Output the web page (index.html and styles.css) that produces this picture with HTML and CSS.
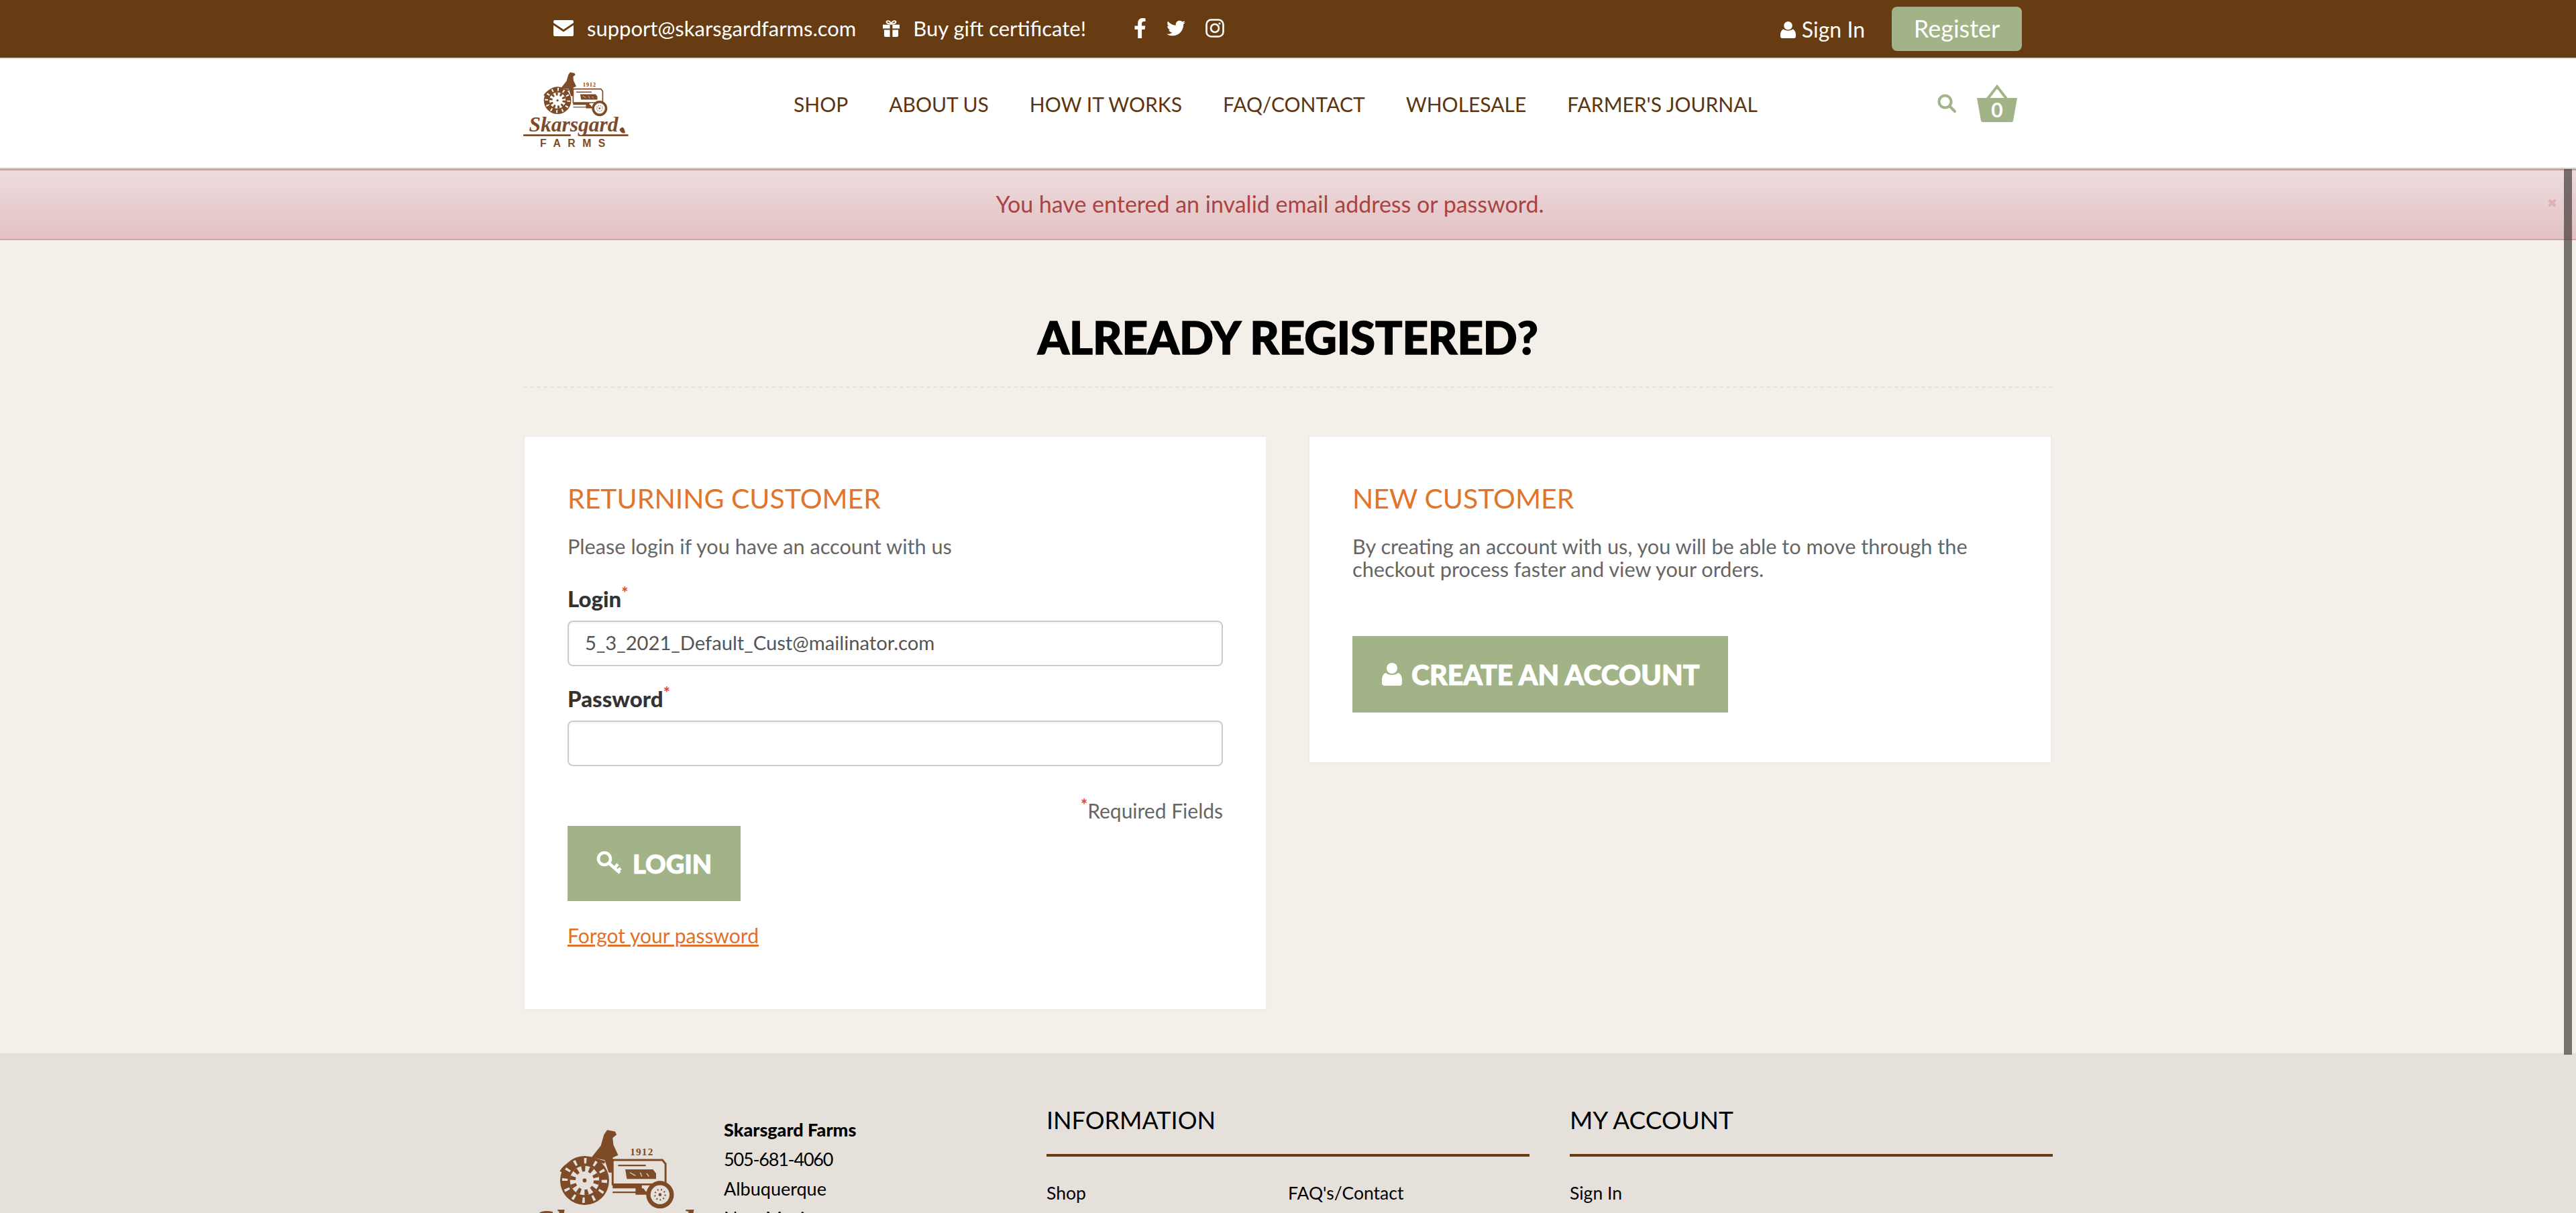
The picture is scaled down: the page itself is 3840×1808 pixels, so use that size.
FILE: index.html
```html
<!DOCTYPE html>
<html lang="en">
<head>
    <meta charset="UTF-8">
    <meta name="viewport" content="width=device-width, initial-scale=1.0">
    <title>Skarsgard Farms - Sign In</title>
    <link rel="stylesheet" href="styles.css">
</head>
<body>
    <div class="scroll-thumb"></div>

    <header>
        <div class="topbar">
            <div class="wrap topbar-row">
                <a class="top-link mail-link" href="#">
                    <svg class="ico-mail" viewBox="0 0 30 24"><path d="M2 0H28A2 2 0 0 1 30 2V4L15 14 0 4V2A2 2 0 0 1 2 0ZM0 7.5 15 17.5 30 7.5V22A2 2 0 0 1 28 24H2A2 2 0 0 1 0 22Z"/></svg>
                    support@skarsgardfarms.com
                </a>
                <a class="top-link gift-link" href="#">
                    <svg class="ico-gift" viewBox="0 0 26 26"><path d="M0 7H11V13H0ZM15 7H26V13H15ZM2 15H11V26H4A2 2 0 0 1 2 24ZM15 15H24V24A2 2 0 0 1 22 26H15Z"/><path class="ico-bow" d="M13 6 C8 6 5 4 6 2 C8 0 12 2 13 6 C14 2 18 0 20 2 C21 4 18 6 13 6Z"/></svg>
                    Buy gift certificate!
                </a>
                <div class="social">
                    <svg class="ico-fb" viewBox="0 0 320 512"><path d="M279.14 288l14.22-92.66h-88.91v-60.13c0-25.35 12.42-50.06 52.24-50.06h40.42V6.26S260.43 0 225.36 0c-73.22 0-121.08 44.38-121.08 124.72v70.62H22.89V288h81.39v224h100.17V288z"/></svg>
                    <svg class="ico-tw" viewBox="0 0 512 512"><path d="M459.37 151.716c.325 4.548.325 9.097.325 13.645 0 138.72-105.583 298.558-298.558 298.558-59.452 0-114.68-17.219-161.137-47.106 8.447.974 16.568 1.299 25.34 1.299 49.055 0 94.213-16.568 130.274-44.832-46.132-.975-84.792-31.188-98.112-72.772 6.498.974 12.995 1.624 19.818 1.624 9.421 0 18.843-1.3 27.614-3.573-48.081-9.747-84.143-51.98-84.143-102.985v-1.299c13.969 7.797 30.214 12.67 47.431 13.319-28.264-18.843-46.781-51.005-46.781-87.391 0-19.492 5.197-37.36 14.294-52.954 51.655 63.675 129.3 105.258 216.365 109.807-1.624-7.797-2.599-15.918-2.599-24.04 0-57.828 46.782-104.934 104.934-104.934 30.213 0 57.502 12.67 76.67 33.137 23.715-4.548 46.456-13.32 66.599-25.34-7.798 24.366-24.366 44.833-46.132 57.827 21.117-2.273 41.584-8.122 60.426-16.243-14.292 20.791-32.161 39.308-52.628 54.253z"/></svg>
                    <svg class="ico-ig" viewBox="0 0 28 28"><rect x="1.5" y="1.5" width="25" height="25" rx="7"/><circle cx="14" cy="14" r="6"/><circle class="ico-dot" cx="21" cy="7" r="1.6"/></svg>
                </div>
                <a class="top-link signin-link" href="#">
                    <svg class="ico-user" viewBox="0 0 24 26"><circle cx="12" cy="6.5" r="6.5"/><path d="M5 12C8 15 16 15 19 12 22 13 24 16 24 21V23A3 3 0 0 1 21 26H3A3 3 0 0 1 0 23V21C0 16 2 13 5 12Z"/></svg>
                    Sign In
                </a>
                <a class="register-btn" href="#">Register</a>
            </div>
        </div>
        <div class="navbar">
            <div class="wrap navbar-row">
                <svg class="logo-head" viewBox="0 0 480 350">
                    <path class="logo-ink" d="M172 72 L196 42 L204 14 L212 2 L232 6 L236 14 L226 22 L228 40 L240 66 L226 72 L232 110 L216 110 L206 78 Z"/>
                    <path class="logo-line" d="M95 108 Q112 78 170 74 L206 84"/>
                    <path class="logo-hood" d="M226 78 H352 L360 88 V140 H226 Z"/>
                    <path class="logo-thin" d="M240 92 H310 M226 160 H322"/>
                    <path class="logo-ink" d="M258 102 H328 L336 112 V126 H262 Z M226 140 H300 V150 H226 Z M284 150 H304 L316 166 H284 Z"/>
                    <path class="logo-gap" d="M270 110 L284 118 M296 110 L300 120 M312 112 L318 120"/>
                    <circle class="logo-ink" cx="155" cy="130" r="62"/>
                    <circle class="logo-tread" cx="155" cy="130" r="50"/>
                    <circle class="logo-gap" cx="155" cy="130" r="36"/>
                    <circle class="logo-ring" cx="155" cy="130" r="30"/>
                    <circle class="logo-ink" cx="155" cy="130" r="5"/>
                    <circle class="logo-ink" cx="346" cy="166" r="35"/>
                    <circle class="logo-gap" cx="346" cy="166" r="23"/>
                    <circle class="logo-ink" cx="346" cy="166" r="4"/>
                    <circle class="logo-spokes" cx="346" cy="166" r="13"/>
                    <text class="logo-year" x="300" y="66">1912</text>
                    <text class="logo-name" x="228" y="272">Skarsgard</text>
                    <path class="logo-ink" d="M0 284 H215 V292 H0 Z M268 284 H476 V292 H268 Z M436 262 Q456 236 462 278 Q442 282 436 262 Z"/>
                    <text class="logo-farms" x="240" y="342">FARMS</text>
                </svg>
                <nav class="main-nav">
                    <a href="#">SHOP</a>
                    <a href="#">ABOUT US</a>
                    <a href="#">HOW IT WORKS</a>
                    <a href="#">FAQ/CONTACT</a>
                    <a href="#">WHOLESALE</a>
                    <a href="#">FARMER'S JOURNAL</a>
                </nav>
                <svg class="ico-search" viewBox="0 0 28 28"><circle cx="11.5" cy="11.5" r="9"/><path d="M18 18 26 26"/></svg>
                <div class="basket">
                    <svg viewBox="0 0 62 56"><path d="M1 20H61L55 54A3 3 0 0 1 52 56H10A3 3 0 0 1 7 54Z"/><path class="basket-handle" d="M17 21 31 3 45 21"/></svg>
                    <span class="basket-count">0</span>
                </div>
            </div>
        </div>
    </header>

    <div class="alert">
        You have entered an invalid email address or password.
        <span class="alert-close">&#10006;</span>
    </div>

    <main class="wrap">
        <h1>ALREADY REGISTERED?</h1>
        <div class="cards">
            <section class="card card-login">
                <h2>RETURNING CUSTOMER</h2>
                <p>Please login if you have an account with us</p>
                <label for="login">Login<sup>*</sup></label>
                <input id="login" type="text" value="5_3_2021_Default_Cust@mailinator.com">
                <label for="password" class="label-pass">Password<sup>*</sup></label>
                <input id="password" type="password">
                <div class="required"><sup>*</sup>Required Fields</div>
                <a class="btn btn-login" href="#">
                    <svg class="ico-key" viewBox="0 0 38 38"><circle cx="12" cy="12" r="9"/><path d="M18 18 35 33M27 26 32 20M32 30 36 26"/></svg>
                    LOGIN
                </a>
                <a class="forgot" href="#">Forgot your password</a>
            </section>
            <section class="card card-new">
                <h2>NEW CUSTOMER</h2>
                <p>By creating an account with us, you will be able to move through the<br>checkout process faster and view your orders.</p>
                <a class="btn btn-create" href="#">
                    <svg class="ico-btn-user" viewBox="0 0 30 34"><circle cx="15" cy="8" r="8"/><path d="M6 15C10 19 20 19 24 15 28 16 30 20 30 26V30A4 4 0 0 1 26 34H4A4 4 0 0 1 0 30V26C0 20 2 16 6 15Z"/></svg>
                    CREATE AN ACCOUNT
                </a>
            </section>
        </div>
    </main>

    <footer>
        <div class="wrap footer-grid">
            <div class="footer-about">
                <svg class="logo-foot" viewBox="0 0 480 350">
                    <path class="logo-ink" d="M172 72 L196 42 L204 14 L212 2 L232 6 L236 14 L226 22 L228 40 L240 66 L226 72 L232 110 L216 110 L206 78 Z"/>
                    <path class="logo-line" d="M95 108 Q112 78 170 74 L206 84"/>
                    <path class="logo-hood" d="M226 78 H352 L360 88 V140 H226 Z"/>
                    <path class="logo-thin" d="M240 92 H310 M226 160 H322"/>
                    <path class="logo-ink" d="M258 102 H328 L336 112 V126 H262 Z M226 140 H300 V150 H226 Z M284 150 H304 L316 166 H284 Z"/>
                    <path class="logo-gap" d="M270 110 L284 118 M296 110 L300 120 M312 112 L318 120"/>
                    <circle class="logo-ink" cx="155" cy="130" r="62"/>
                    <circle class="logo-tread" cx="155" cy="130" r="50"/>
                    <circle class="logo-gap" cx="155" cy="130" r="36"/>
                    <circle class="logo-ring" cx="155" cy="130" r="30"/>
                    <circle class="logo-ink" cx="155" cy="130" r="5"/>
                    <circle class="logo-ink" cx="346" cy="166" r="35"/>
                    <circle class="logo-gap" cx="346" cy="166" r="23"/>
                    <circle class="logo-ink" cx="346" cy="166" r="4"/>
                    <circle class="logo-spokes" cx="346" cy="166" r="13"/>
                    <text class="logo-year" x="300" y="66">1912</text>
                    <text class="logo-name" x="228" y="272">Skarsgard</text>
                </svg>
                <address>
                    <strong>Skarsgard Farms</strong>
                    <span class="phone">505-681-4060</span>
                    <span>Albuquerque</span>
                    <span>New Mexico</span>
                </address>
            </div>
            <div class="footer-col">
                <h3>INFORMATION</h3>
                <div class="footer-links two-col">
                    <a href="#">Shop</a>
                    <a href="#">FAQ's/Contact</a>
                </div>
            </div>
            <div class="footer-col">
                <h3 class="h3-account">MY ACCOUNT</h3>
                <div class="footer-links">
                    <a href="#">Sign In</a>
                </div>
            </div>
        </div>
    </footer>
</body>
</html>
```

FILE: styles.css
```css
/* Page */
html, body {
    margin: 0;
    padding: 0;
    height: 1808px;
    overflow: hidden;
}
body {
    position: relative;
    font-family: Lato, "Open Sans", sans-serif;
    background-color: #f4f0e9;
    color: #666;
    font-size: 30px;
}
a {
    color: inherit;
    text-decoration: none;
}
.wrap {
    width: 2280px;
    margin: 0 auto;
    box-sizing: border-box;
}

/* Scrollbar thumb, over everything */
.scroll-thumb {
    position: absolute;
    top: 252px;
    right: 6px;
    width: 12px;
    height: 1320px;
    background-color: rgba(60, 55, 50, 0.68);
    z-index: 5;
}

/* Top bar */
.topbar {
    height: 86px;
    background-color: #683c12;
    border-bottom: 2px solid #e6e0da;
    color: #fff;
}
.topbar-row {
    display: flex;
    align-items: center;
    height: 86px;
    padding: 0 46px 0 45px;
}
.top-link {
    display: flex;
    align-items: center;
    font-size: 31px;
    line-height: 40px;
    margin-top: -2px;
}
.top-link svg {
    fill: #fff;
    flex: none;
}
.ico-mail {
    width: 30px;
    height: 24px;
    margin-right: 20px;
}
.ico-gift {
    width: 25px;
    height: 25px;
    margin-right: 20px;
}
.mail-link {
    margin-right: 40px;
}
.social {
    display: flex;
    align-items: center;
    margin-left: 71px;
    margin-top: -2px;
}
.social svg {
    fill: #fff;
    display: block;
}
.ico-fb {
    width: 19px;
    height: 30px;
    margin-right: 30px;
}
.ico-tw {
    width: 28px;
    height: 28px;
    margin-right: 30px;
}
.ico-ig {
    width: 28px;
    height: 28px;
}
.social .ico-ig {
    fill: none;
    stroke: #fff;
    stroke-width: 2.6;
}
.social .ico-ig .ico-dot {
    fill: #fff;
    stroke: none;
}
.ico-bow {
    fill: none;
    stroke: #fff;
    stroke-width: 2;
}
.signin-link {
    margin-left: auto;
    margin-top: 2px;
    font-size: 32px;
}
.ico-user {
    width: 23px;
    height: 25px;
    margin-right: 9px;
}
.register-btn {
    margin-left: 40px;
    width: 194px;
    height: 66px;
    line-height: 64px;
    text-align: center;
    background-color: #a2b487;
    border-radius: 8px;
    font-size: 36px;
}

/* Nav */
.navbar {
    background-color: #fff;
    height: 162px;
    border-bottom: 2px solid #ccc;
}
.navbar-row {
    display: flex;
    align-items: center;
    height: 162px;
    padding-bottom: 28px;
}
.logo-head {
    width: 158px;
    height: 115px;
    flex: none;
    margin-top: 18px;
    --logo-bg: #fff;
}
.main-nav {
    display: flex;
    gap: 61px;
    margin-left: 245px;
    font-size: 30px;
    color: #5d3510;
}
.ico-search {
    width: 28px;
    height: 28px;
    margin-left: auto;
    margin-top: -2px;
    fill: none;
    stroke: #a2b487;
    stroke-width: 4;
    stroke-linecap: round;
}
.basket {
    position: relative;
    width: 62px;
    height: 56px;
    margin-left: 30px;
    margin-right: 52px;
    margin-top: -2px;
}
.basket svg {
    display: block;
    width: 62px;
    height: 56px;
    fill: #a2b487;
}
.basket .basket-handle {
    fill: none;
    stroke: #a2b487;
    stroke-width: 4;
}
.basket-count {
    position: absolute;
    left: 0;
    right: 0;
    top: 17px;
    text-align: center;
    color: #fff;
    font-weight: 700;
    font-size: 30px;
    line-height: 40px;
}

/* Logo pieces */
.logo-ink {
    fill: #7d4b27;
}
.logo-gap {
    fill: var(--logo-bg);
    stroke: var(--logo-bg);
    stroke-width: 2;
}
.logo-line {
    fill: none;
    stroke: #7d4b27;
    stroke-width: 7;
}
.logo-hood {
    fill: var(--logo-bg);
    stroke: #7d4b27;
    stroke-width: 5;
}
.logo-thin {
    fill: none;
    stroke: #7d4b27;
    stroke-width: 4;
}
.logo-tread {
    fill: none;
    stroke: var(--logo-bg);
    stroke-width: 14;
    stroke-dasharray: 6 20;
}
.logo-ring {
    fill: none;
    stroke: #7d4b27;
    stroke-width: 14;
    stroke-dasharray: 9 10;
}
.logo-spokes {
    fill: none;
    stroke: #7d4b27;
    stroke-width: 4;
    stroke-dasharray: 3 6;
}
.logo-year, .logo-name, .logo-farms {
    fill: #7d4b27;
    text-anchor: middle;
}
.logo-year {
    font-family: "Liberation Serif", serif;
    font-size: 26px;
    font-weight: 700;
    letter-spacing: 2px;
}
.logo-name {
    font-family: "Liberation Serif", serif;
    font-style: italic;
    font-weight: 700;
    font-size: 96px;
}
.logo-farms {
    font-family: "Liberation Sans", sans-serif;
    font-weight: 700;
    font-size: 48px;
    letter-spacing: 32px;
}

/* Alert */
.alert {
    position: relative;
    box-sizing: border-box;
    height: 106px;
    line-height: 100px;
    text-align: center;
    padding-right: 54px;
    font-size: 34px;
    color: #a94442;
    background: linear-gradient(to bottom, #eedcdd, #e2c1c4);
    border-top: 2px solid #c99a9c;
    border-bottom: 2px solid #d1a5a8;
}
.alert-close {
    position: absolute;
    top: -2px;
    right: 28px;
    font-size: 18px;
    color: #dcb0b4;
}

/* Main */
h1 {
    margin: 0;
    padding: 102px 0 32px;
    height: 84px;
    line-height: 84px;
    text-align: center;
    font-size: 67px;
    font-weight: 900;
    color: #000;
    -webkit-text-stroke: 1.5px #000;
    border-bottom: 2px dashed #e6e0da;
}
.cards {
    display: flex;
    align-items: flex-start;
    gap: 61px;
    margin-top: 71px;
}
.card {
    box-sizing: border-box;
    width: 1109px;
    padding: 0 64px;
    background-color: #fff;
    border: 2px solid #eeeceb;
}
.card-login {
    height: 857px;
}
.card-new {
    height: 489px;
}
h2 {
    margin: 0;
    padding-top: 67px;
    line-height: 50px;
    font-size: 41px;
    font-weight: 400;
    color: #e0752d;
}
.card p {
    margin: 30px 0 0;
    line-height: 34px;
    font-size: 30.7px;
    color: #666;
}
label {
    display: block;
    margin-top: 40px;
    line-height: 40px;
    font-size: 33px;
    font-weight: 900;
    color: #333;
}
.label-pass {
    margin-top: 28px;
}
sup {
    color: #e8432b;
    font-size: 24px;
    line-height: 0;
    font-weight: 700;
}
input {
    display: block;
    box-sizing: border-box;
    width: 100%;
    height: 68px;
    margin-top: 13px;
    padding: 0 24px 4px;
    border: 2px solid #ccc;
    border-radius: 8px;
    background-color: #fff;
    box-shadow: inset 0 2px 3px rgba(0, 0, 0, 0.05);
    font-family: inherit;
    font-size: 29.2px;
    color: #555;
}
.required {
    margin-top: 48px;
    text-align: right;
    line-height: 36px;
    font-size: 30px;
}
.btn {
    display: flex;
    align-items: center;
    box-sizing: border-box;
    background-color: #a2b487;
    color: #fff;
    font-weight: 900;
    font-size: 41px;
    -webkit-text-stroke: 1px #fff;
}
.btn svg {
    flex: none;
}
.btn-login {
    width: 258px;
    height: 112px;
    margin-top: 5px;
    padding-left: 43px;
    font-size: 38px;
}
.ico-key {
    width: 38px;
    height: 38px;
    margin-right: 16px;
    fill: none;
    stroke: #fff;
    stroke-width: 4.5;
}
.forgot {
    display: inline-block;
    margin-top: 34px;
    line-height: 34px;
    font-size: 30px;
    color: #e0702a;
    text-decoration: underline;
}
.btn-create {
    width: 560px;
    height: 114px;
    margin-top: 82px;
    padding-left: 44px;
    white-space: nowrap;
}
.ico-btn-user {
    width: 30px;
    height: 34px;
    margin-right: 14px;
    fill: #fff;
}

/* Footer */
footer {
    height: 238px;
    margin-top: 64px;
    background-color: #e6e0da;
    color: #000;
    overflow: hidden;
}
.footer-grid {
    display: grid;
    grid-template-columns: 720px 720px 720px;
    gap: 60px;
}
.footer-about {
    display: flex;
    padding-top: 113px;
}
.logo-foot {
    width: 283px;
    height: 206px;
    flex: none;
    --logo-bg: #e6e0da;
}
address {
    display: flex;
    flex-direction: column;
    margin-left: 16px;
    margin-top: -21px;
    font-style: normal;
    font-size: 27px;
    line-height: 44px;
}
address strong {
    font-weight: 900;
}
.phone {
    letter-spacing: -1.2px;
}
h3 {
    margin: 0;
    height: 154px;
    box-sizing: border-box;
    padding-top: 74px;
    line-height: 50px;
    font-size: 36px;
    font-weight: 400;
    color: #000;
    border-bottom: 4px solid #683c12;
}
.h3-account {
    font-size: 37px;
}
.footer-links {
    padding-top: 34px;
    line-height: 40px;
    font-size: 26.5px;
}
.two-col {
    display: grid;
    grid-template-columns: 360px 360px;
}
```
